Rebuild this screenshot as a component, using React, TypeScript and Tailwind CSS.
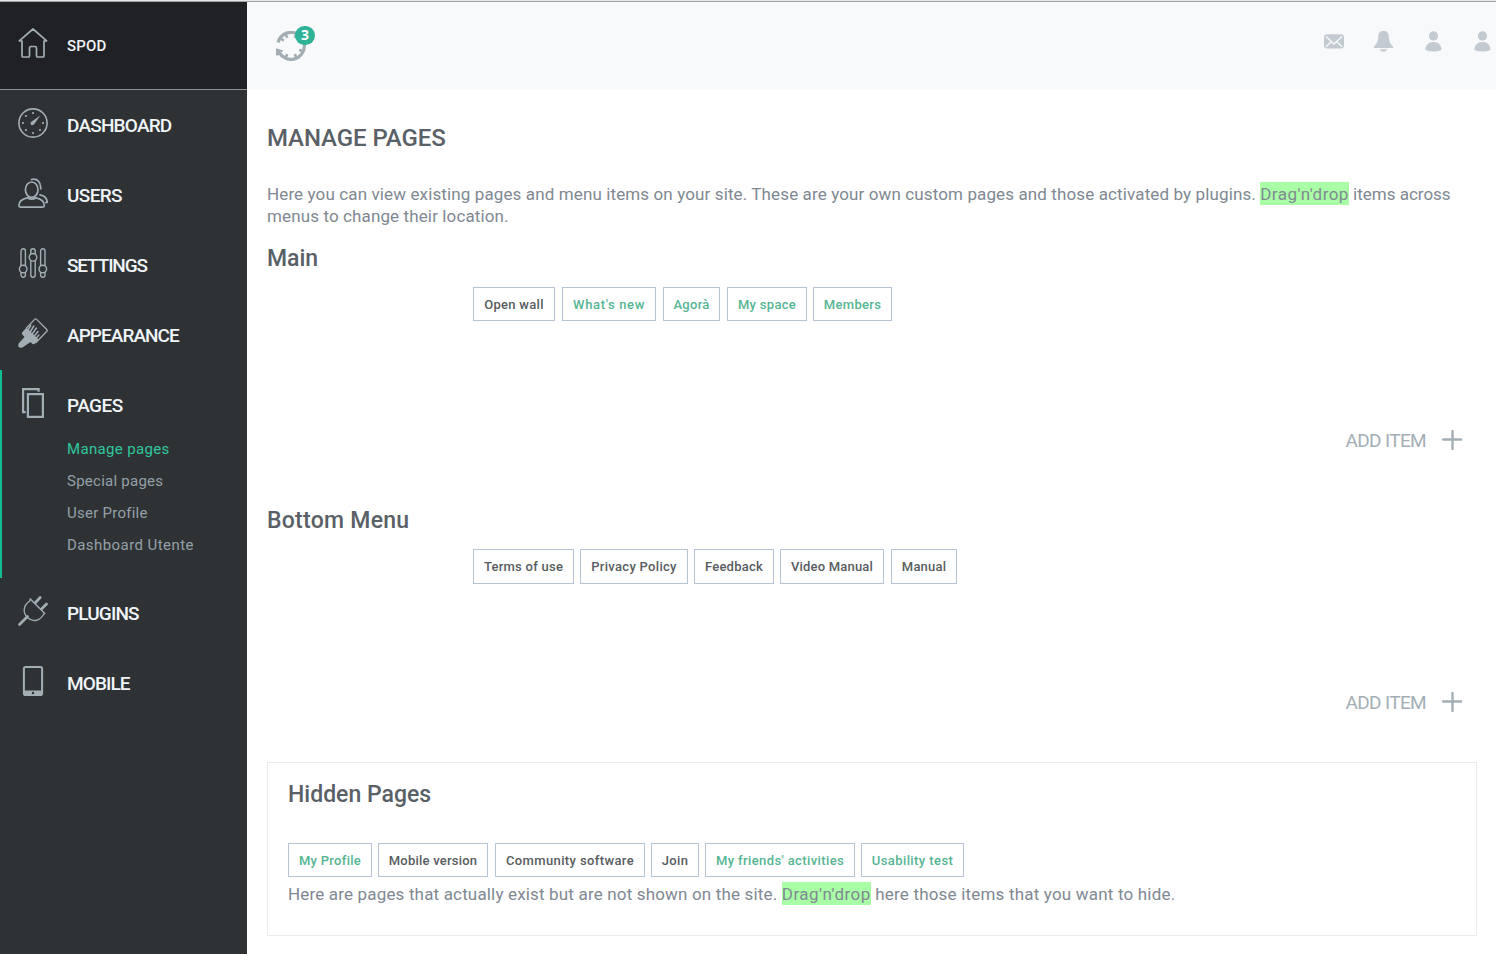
import React from "react";

type IconProps = { children: React.ReactNode };

function MenuIcon({ children }: IconProps) {
  return (
    <svg
      width="30"
      height="30"
      viewBox="0 0 30 30"
      fill="none"
      stroke="#a3aeb4"
      strokeWidth="1.7"
      strokeLinecap="round"
      strokeLinejoin="round"
      className="shrink-0"
    >
      {children}
    </svg>
  );
}

const HomeIcon = () => (
  <MenuIcon>
    <path d="M15 1 1.3 12.8 4 13V28q0 1 1 1h5.500q1 0 1-1v-8q0-1.500 1.500-1.500h4q1.500 0 1.500 1.500v8q0 1 1 1H25q1 0 1-1V13l2.700-.2Z" />
  </MenuIcon>
);

const GaugeIcon = () => (
  <MenuIcon>
    <circle cx="15" cy="15" r="14.100" strokeWidth="1.600" />
    <path d="m22.300 7.600-9.300 6.400q-1.300 1.700.3 2.900 1.800.8 3-.8Z" fill="#a3aeb4" stroke="none" />
    <g fill="#a3aeb4" stroke="none">
      <circle cx="15" cy="5" r="1.100" /><circle cx="8" cy="8" r="1.100" /><circle cx="5" cy="15" r="1.100" />
      <circle cx="8" cy="22" r="1.100" /><circle cx="15" cy="25" r="1.100" /><circle cx="22" cy="22" r="1.100" /><circle cx="25" cy="15" r="1.100" />
    </g>
  </MenuIcon>
);

const UsersIcon = () => (
  <MenuIcon>
    <ellipse cx="13.700" cy="11.700" rx="6.300" ry="7.700" />
    <path d="M.9 27.600q0 1.500 1.400 1.500h22.600q1.400 0 1.400-1.500c0-4.500-3-6.800-8.300-7.800-2.600 1.700-6 1.700-8.600 0C3.800 20.800.9 23 .9 27.600Z" />
    <path d="M13.500 1.500c5-1.800 9.800 2.500 9.200 9.500M22 16.800c4.500.7 7 3.200 7.200 7.700h-1.500" />
  </MenuIcon>
);

const SlidersIcon = () => (
  <MenuIcon>
    <g strokeWidth="1.400">
      <path d="M3 17.500V3a2.200 2.200 0 0 1 4.400 0v14.500M3 24.500V27a2.200 2.200 0 0 0 4.400 0v-2.500" />
      <circle cx="5.200" cy="21" r="3.800" />
      <path d="M12.800 5.500V3a2.200 2.200 0 0 1 4.400 0v2.500M12.800 13v14a2.200 2.200 0 0 0 4.400 0V13" />
      <circle cx="15" cy="9.300" r="3.800" />
      <path d="M22.600 17.500V3A2.200 2.200 0 0 1 27 3v14.500M22.600 24.500V27a2.200 2.200 0 0 0 4.400 0v-2.500" />
      <circle cx="24.800" cy="21" r="3.800" />
    </g>
  </MenuIcon>
);

const BrushIcon = () => (
  <MenuIcon>
    <path d="M8.500 10 16.600 1.400q1-1 2 0L28.800 11.500q.8.9 0 1.800L18 24.500" strokeWidth="1.300" />
    <path d="M4.500 14 8.500 9.500 20.700 21.700 16.500 26q-1 .8-2.500-.5L12.500 24 4.500 29.500Q1.500 30.500.5 28.500T1.500 24.500L6.500 19 4.200 16.500Q3.500 15 4.500 14Z" fill="#a3aeb4" stroke="none" />
    <path d="m10 12 2.700-4.500M12.200 14l3.600-6M14.200 16l4.200-6M16.200 18l3.800-4.500M18.300 20l2.500-3" strokeWidth="1.500" />
  </MenuIcon>
);

const PagesIcon = () => (
  <MenuIcon>
    <g strokeWidth="2.200" strokeLinecap="butt" strokeLinejoin="miter">
      <path d="M20.600 3.700V1.100H5.100v23.100h2.600" />
      <rect x="9.900" y="6.100" width="15" height="22.800" />
    </g>
  </MenuIcon>
);

const PlugIcon = () => (
  <MenuIcon>
    <path d="M12.300 3 26.800 17.500 25.500 18.500C21 26 14 26 9.500 21.500S4.500 10 11.700 5Z" strokeWidth="1.300" strokeLinejoin="miter" />
    <path d="m1.500 28.500 8-8M17.500 6.500l4.700-5M23.500 13l5-5" strokeWidth="2.700" />
  </MenuIcon>
);

const MobileIcon = () => (
  <MenuIcon>
    <rect x="5.900" y="1" width="18.200" height="28" rx="1.800" strokeWidth="2" />
    <path d="M5.500 24.500h19V28q0 1.500-1.500 1.500H7q-1.500 0-1.500-1.500Z" fill="#a3aeb4" stroke="none" />
    <circle cx="15" cy="27" r="1.200" fill="#2e3235" stroke="none" />
  </MenuIcon>
);

function MenuItem({ icon, label, fit }: { icon: React.ReactNode; label: string; fit: string }) {
  return (
    <div className="flex h-[70px] items-center gap-[19px] pl-[18px]">
      <div className="-mt-1 shrink-0">{icon}</div>
      <span className={`pt-[2px] text-[19px] leading-[22px] font-medium whitespace-nowrap text-[#f0f5f8] ${fit}`}>
        {label}
      </span>
    </div>
  );
}

function Tag({ label, size, green, spacing = "tracking-[0.3px]" }: { label: string; size: string; green?: boolean; spacing?: string }) {
  return (
    <div
      className={`flex shrink-0 items-start justify-center border border-[#b6c3d2] bg-white pt-[7px] text-[13px] leading-5 font-medium whitespace-nowrap ${size} ${spacing} ${
        green ? "text-[#55b593]" : "text-[#585c60]"
      }`}
    >
      {label}
    </div>
  );
}

function AddItem() {
  return (
    <div className="flex h-[24px] items-center justify-end gap-[16px] pr-[34px] text-[#a3aeb5]">
      <span className="pt-[2px] text-[19px] leading-[22px] tracking-[-0.65px] whitespace-nowrap">ADD ITEM</span>
      <svg width="20" height="20" viewBox="0 0 20 20" stroke="#a3aeb5" strokeWidth="2.400" strokeLinecap="round">
        <path d="M10.500 1v18M1.200 9.500h18" />
      </svg>
    </div>
  );
}

function UserIcon() {
  return (
    <svg width="17" height="21" viewBox="0 0 17 21" fill="#c3cad1" className="shrink-0">
      <circle cx="8.500" cy="4.900" r="4.600" />
      <path d="M.4 19C.5 14.500 3.300 11 8.500 11s8 3.500 8.100 8q-8.100 3.200-16.200 0Z" />
    </svg>
  );
}

export default function App() {
  return (
    <div className="flex h-[954px] w-[1496px] flex-col overflow-hidden bg-white font-['Roboto','Liberation_Sans',sans-serif]">
      <div className="h-[2px] shrink-0 border-b border-[#a2a5a5] bg-[#e4e6e5]" />
      <div className="flex min-h-0 flex-1">
        <aside className="w-[247px] shrink-0 bg-[#2e3235]">
          <div className="flex h-[88px] items-center gap-[19px] border-b border-[#8d9193] bg-[#202124] pl-[18px]">
            <div className="-mt-[5px]"><HomeIcon /></div>
            <span className="text-[15px] leading-5 font-medium tracking-[0.2px] text-[#f0f5f8]">SPOD</span>
          </div>
          <MenuItem icon={<GaugeIcon />} label="DASHBOARD" fit="tracking-[-0.8px]" />
          <MenuItem icon={<UsersIcon />} label="USERS" fit="tracking-[-0.65px]" />
          <MenuItem icon={<SlidersIcon />} label="SETTINGS" fit="tracking-[-1.15px]" />
          <MenuItem icon={<BrushIcon />} label="APPEARANCE" fit="tracking-[-0.95px]" />
          <div className="h-[208px] border-l-2 border-[#12bd95]">
            <div className="-ml-[2px]">
              <MenuItem icon={<PagesIcon />} label="PAGES" fit="tracking-[-0.55px]" />
              <ul className="-mt-[7px] pl-[67px] text-[15px] leading-8 tracking-[0.25px] text-[#94a0a8]">
                <li className="tracking-[0.35px] text-[#2fc79f]">Manage pages</li>
                <li>Special pages</li>
                <li>User Profile</li>
                <li className="tracking-[0.43px]">Dashboard Utente</li>
              </ul>
            </div>
          </div>
          <MenuItem icon={<PlugIcon />} label="PLUGINS" fit="tracking-[-0.85px]" />
          <MenuItem icon={<MobileIcon />} label="MOBILE" fit="tracking-[-0.9px]" />
        </aside>

        <div className="flex min-w-0 flex-1 flex-col">
          <header className="flex h-[88px] shrink-0 items-start justify-between bg-[#f8f9fb] pr-[5px] pl-[29px]">
            <div className="relative mt-[29px] h-[30px] w-[30px]">
              <svg width="30" height="30" viewBox="0 0 30 30" fill="none" stroke="#a3aeb4">
                <path d="M2 11.500A13.400 13.400 0 0 1 28.400 15 13.400 13.400 0 0 1 3 21" strokeWidth="3.200" />
                <path d="M5 7.500 7.800 9.700M9.500 3.200l1.800 3.600M20.500 3.200l-1.800 3.600M26.800 9.500l-3.600 1.800M26.800 20.500l-3.600-1.800M20.500 26.800l-1.800-3.600M9.500 26.800l1.800-3.600" strokeWidth="2.600" />
                <path d="M0 17.300 7.500 19.500 5 21.500 4.500 24 0 24.500Z" fill="#a3aeb4" stroke="none" />
              </svg>
              <span className="absolute -top-[5px] left-[19px] flex h-[19px] w-[20px] items-center justify-center rounded-full bg-[#2eb398] pb-[2px] font-['Noto_Sans',sans-serif] text-[14px] leading-none font-bold text-white">
                3
              </span>
            </div>
            <div className="mt-[29px] flex items-center">
              <svg width="20" height="15" viewBox="0 0 20 15" className="mr-[30px] shrink-0">
                <rect y=".3" width="20" height="14.200" rx="3" fill="#c3cad1" />
                <path d="m2 2.500 8 7.500L18 2.500M2 12.800 7.200 7.800M18 12.800 12.800 7.800" fill="none" stroke="#f8f9fb" strokeWidth="1.300" />
              </svg>
              <svg width="19" height="21" viewBox="0 0 19 21" fill="#c3cad1" className="mr-8 shrink-0">
                <path d="M9.500 0C13 0 14.500 2 14.700 5c.3 5 1.300 7.500 4.300 10.500V17H0v-1.500C3 12.500 4 10 4.300 5 4.500 2 6 0 9.500 0ZM5.500 18.200h8q-1.500 2.600-4 2.600t-4-2.600Z" />
              </svg>
              <div className="flex gap-8"><UserIcon /><UserIcon /></div>
            </div>
          </header>

          <main className="flex flex-1 flex-col pl-5">
            <h1 className="mt-8 h-8 text-[24px] leading-8 font-medium tracking-[-0.08px] whitespace-nowrap text-[#596066]">MANAGE PAGES</h1>
            <div className="mt-[29px] text-[17px] leading-[22px] tracking-[0.12px] whitespace-nowrap text-[#808892]">
              <p>
                Here you can view existing pages and menu items on your site. These are your own custom pages and those activated by plugins.{" "}
                <span className="bg-[#a9ffa5] pt-[2px] pb-px tracking-[0.45px]">Drag'n'drop</span>
                <span className="tracking-normal"> items across</span>
              </p>
              <p>menus to change their location.</p>
            </div>
            <h2 className="mt-[16px] h-8 text-[23px] leading-8 font-medium text-[#596066]">Main</h2>
            <div className="mt-[12px] ml-[206px] flex h-[34px]">
              <Tag label="Open wall" size="w-[82px] mr-[7px]" />
              <Tag label="What's new" size="w-[94px] mr-[7px]" spacing="tracking-[0.65px]" green />
              <Tag label="Agorà" size="w-[57px] mr-[7px]" green />
              <Tag label="My space" size="w-[80px] mr-[6px]" green />
              <Tag label="Members" size="w-[79px]" green />
            </div>
            <div className="mt-[107px]"><AddItem /></div>
            <h2 className="mt-[53px] h-8 text-[23px] leading-8 font-medium tracking-[0.27px] text-[#596066]">Bottom Menu</h2>
            <div className="mt-[12px] ml-[206px] flex h-[35px]">
              <Tag label="Terms of use" size="w-[101px] mr-[6px]" spacing="tracking-[0.25px]" />
              <Tag label="Privacy Policy" size="w-[108px] mr-[6px]" />
              <Tag label="Feedback" size="w-[80px] mr-[6px]" spacing="tracking-[0.25px]" />
              <Tag label="Video Manual" size="w-[104px] mr-[7px]" spacing="tracking-[0.2px]" />
              <Tag label="Manual" size="w-[66px]" spacing="tracking-[0.2px]" />
            </div>
            <div className="mt-[106px]"><AddItem /></div>
            <section className="mt-[48px] mr-[19px] h-[174px] border border-[#ececec] pl-5">
              <h2 className="mt-[16px] h-8 text-[23px] leading-8 font-medium text-[#596066]">Hidden Pages</h2>
              <div className="mt-[32px] flex h-[34px]">
                <Tag label="My Profile" size="w-[84px] mr-[6px]" green />
                <Tag label="Mobile version" size="w-[110px] mr-[7px]" spacing="tracking-[0.23px]" />
                <Tag label="Community software" size="w-[150px] mr-[6px]" spacing="tracking-[0.38px]" />
                <Tag label="Join" size="w-[48px] mr-[6px]" />
                <Tag label="My friends' activities" size="w-[150px] mr-[6px]" spacing="tracking-[0.39px]" green />
                <Tag label="Usability test" size="w-[103px]" spacing="tracking-[0.42px]" green />
              </div>
              <p className="mt-[6px] text-[17px] leading-[22px] tracking-[0.165px] whitespace-nowrap text-[#808892]">
                Here are pages that actually exist but are not shown on the site.{" "}
                <span className="bg-[#a9ffa5] pt-[2px] pb-px tracking-[0.5px]">Drag'n'drop</span>
                <span className="tracking-[0.19px]"> here those items that you want to hide.</span>
              </p>
            </section>
          </main>
        </div>
      </div>
    </div>
  );
}
